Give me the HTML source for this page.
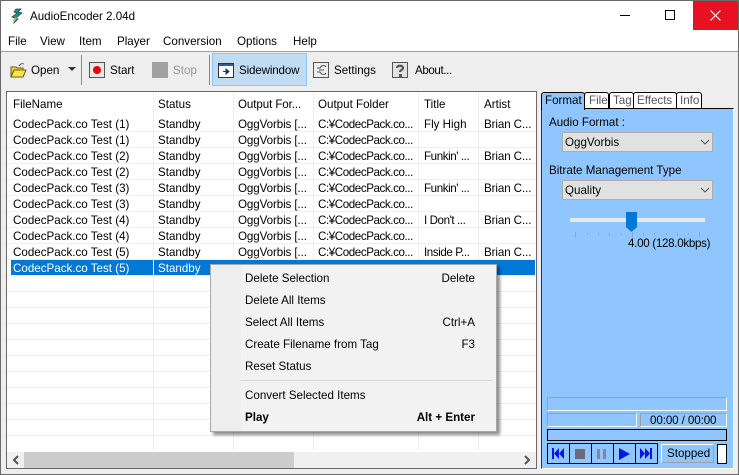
<!DOCTYPE html>
<html><head><meta charset="utf-8">
<style>
html,body{margin:0;padding:0;background:#fff}
body{width:739px;height:475px;position:relative;overflow:hidden;font:11.6px "Liberation Sans","Noto Sans CJK JP",sans-serif;color:#000}
.a,.t,.c{position:absolute}
.t{white-space:nowrap;line-height:14px;height:14px;margin-top:1px}
.c{white-space:nowrap;line-height:14px;height:14px;margin-top:1px}
.p{letter-spacing:-.42px}
.o{letter-spacing:-.1px}
.g{color:#999}
</style></head><body>
<!-- window -->
<div class="a" style="left:0;top:0;width:737px;height:473px;border:1px solid #6a6a6a;background:#fff"></div>
<svg class="a" style="left:10px;top:8px" width="16" height="16" viewBox="0 0 16 16"><path d="M6 1h5l-3 3 4 1-6 5 2 1-4 4 1-5-3-1 5-4-3-1z" fill="#2f8f7f" stroke="#1d4a52" stroke-width=".8"/><path d="M3 12l3-3 1 1-3 4z" fill="#e0b040"/></svg>
<div class="t" style="left:30px;top:9px">AudioEncoder 2.04d</div>
<div class="a" style="left:693px;top:1px;width:45px;height:29px;background:#e81123"></div>
<svg class="a" style="left:620px;top:9px" width="110" height="14"><path d="M0 6.500h10" stroke="#000"/><rect x="45.500" y="1.500" width="9" height="9" fill="none" stroke="#000"/><path d="M90.500 1.500l10 10M100.500 1.500l-10 10" stroke="#fff" stroke-width="1.1"/></svg>
<div class="t" style="left:8px;top:34px">File</div>
<div class="t" style="left:40px;top:34px">View</div>
<div class="t" style="left:79px;top:34px">Item</div>
<div class="t" style="left:117px;top:34px">Player</div>
<div class="t" style="left:163px;top:34px">Conversion</div>
<div class="t" style="left:237px;top:34px">Options</div>
<div class="t" style="left:293px;top:34px">Help</div>
<!-- toolbar -->
<div class="a" style="left:1px;top:51px;width:737px;height:1px;background:#a0a0a0"></div>
<div class="a" style="left:1px;top:52px;width:737px;height:422px;background:#eeeeee"></div>
<svg class="a" style="left:10px;top:62px" width="17" height="16" viewBox="0 0 17 16"><path d="M1 5h5l1 1h6v2H4l-3 7z" fill="#f2d43c" stroke="#6b5a10"/><path d="M1 15l3-7h12l-3 7z" fill="#fbe64a" stroke="#6b5a10"/><path d="M9 4c1-2 3-3 5-2" fill="none" stroke="#666"/></svg>
<div class="t" style="left:31px;top:63px">Open</div>
<svg class="a" style="left:68px;top:67px" width="9" height="5"><path d="M0 0h8L4 4z" fill="#333"/></svg>
<div class="a" style="left:81px;top:55px;width:1px;height:30px;background:#8a8a8a"></div>
<div class="a" style="left:89px;top:62px;width:14px;height:14px;border:1px solid #555;background:#e8e8e8"></div>
<div class="a" style="left:93px;top:66px;width:8px;height:8px;border-radius:50%;background:#ee0000"></div>
<div class="t" style="left:110px;top:63px">Start</div>
<div class="a" style="left:152px;top:62px;width:16px;height:16px;background:#a0a0a0"></div>
<div class="t g" style="left:173px;top:63px">Stop</div>
<div class="a" style="left:209px;top:55px;width:1px;height:30px;background:#8a8a8a"></div>
<div class="a" style="left:212px;top:53px;width:93px;height:31px;background:#bfdcf2;border:1px solid #92c4ec"></div>
<svg class="a" style="left:218px;top:63px" width="16" height="15"><rect x=".5" y=".5" width="15" height="14" fill="#fff" stroke="#333"/><rect x="1" y="1" width="14" height="2" fill="#3a5a9a"/><path d="M5 8.500h5M8 6l3 2.500L8 11z" stroke="#123a6a" fill="#123a6a"/></svg>
<div class="t" style="left:239px;top:63px;letter-spacing:-.15px">Sidewindow</div>
<svg class="a" style="left:313px;top:62px" width="16" height="16"><rect x=".5" y=".5" width="15" height="15" fill="#eee" stroke="#555"/><path d="M4 6h3c1-3 5-3 6-1M4 10h3c1 3 5 3 6 1M6 8h5" fill="none" stroke="#555"/></svg>
<div class="t" style="left:334px;top:63px">Settings</div>
<svg class="a" style="left:392px;top:62px" width="16" height="16"><rect x=".5" y=".5" width="15" height="15" fill="#e2e2e2" stroke="#555"/><path d="M5 6c0-3 6-3 6 0 0 2-3 2-3 4" fill="none" stroke="#555" stroke-width="2.2"/><rect x="7" y="12" width="3" height="3" fill="#555"/></svg>
<div class="t" style="left:415px;top:63px;letter-spacing:-.4px">About...</div>
<!-- list -->
<div class="a" style="left:6px;top:91px;width:529px;height:376px;border:1px solid #6a6a6a;background:#fff;overflow:hidden"></div>
<svg class="a" style="left:7px;top:92px" width="529" height="360">
<g stroke="#efefef" fill="none">
<path d="M0 39.500H529M0 55.500H529M0 71.500H529M0 87.500H529M0 103.500H529M0 119.500H529M0 135.500H529M0 151.500H529M0 167.500H529M0 183.500H529M0 199.500H529M0 215.500H529M0 231.500H529M0 247.500H529M0 263.500H529M0 279.500H529M0 295.500H529M0 311.500H529M0 327.500H529M0 343.500H529"/>
<path d="M146.500 0V358M226.500 0V358M306.500 0V358M411.500 0V358M471.500 0V358"/>
</g></svg>
<div class="c" style="left:13px;top:97px">FileName</div><div class="c" style="left:158px;top:97px">Status</div><div class="c o" style="left:238px;top:97px">Output For...</div><div class="c" style="left:318px;top:97px">Output Folder</div><div class="c" style="left:424px;top:97px">Title</div><div class="c" style="left:484px;top:97px">Artist</div>

<div class="c" style="left:13px;top:117px">CodecPack.co Test (1)</div><div class="c" style="left:158px;top:117px">Standby</div><div class="c o" style="left:238px;top:117px">OggVorbis [...</div><div class="c p" style="left:318px;top:117px">C:¥CodecPack.co...</div><div class="c" style="left:424px;top:117px">Fly High</div><div class="c o" style="left:484px;top:117px">Brian C...</div>
<div class="c" style="left:13px;top:133px">CodecPack.co Test (1)</div><div class="c" style="left:158px;top:133px">Standby</div><div class="c o" style="left:238px;top:133px">OggVorbis [...</div><div class="c p" style="left:318px;top:133px">C:¥CodecPack.co...</div>
<div class="c" style="left:13px;top:149px">CodecPack.co Test (2)</div><div class="c" style="left:158px;top:149px">Standby</div><div class="c o" style="left:238px;top:149px">OggVorbis [...</div><div class="c p" style="left:318px;top:149px">C:¥CodecPack.co...</div><div class="c p" style="left:424px;top:149px">Funkin' ...</div><div class="c o" style="left:484px;top:149px">Brian C...</div>
<div class="c" style="left:13px;top:165px">CodecPack.co Test (2)</div><div class="c" style="left:158px;top:165px">Standby</div><div class="c o" style="left:238px;top:165px">OggVorbis [...</div><div class="c p" style="left:318px;top:165px">C:¥CodecPack.co...</div>
<div class="c" style="left:13px;top:181px">CodecPack.co Test (3)</div><div class="c" style="left:158px;top:181px">Standby</div><div class="c o" style="left:238px;top:181px">OggVorbis [...</div><div class="c p" style="left:318px;top:181px">C:¥CodecPack.co...</div><div class="c p" style="left:424px;top:181px">Funkin' ...</div><div class="c o" style="left:484px;top:181px">Brian C...</div>
<div class="c" style="left:13px;top:197px">CodecPack.co Test (3)</div><div class="c" style="left:158px;top:197px">Standby</div><div class="c o" style="left:238px;top:197px">OggVorbis [...</div><div class="c p" style="left:318px;top:197px">C:¥CodecPack.co...</div>
<div class="c" style="left:13px;top:213px">CodecPack.co Test (4)</div><div class="c" style="left:158px;top:213px">Standby</div><div class="c o" style="left:238px;top:213px">OggVorbis [...</div><div class="c p" style="left:318px;top:213px">C:¥CodecPack.co...</div><div class="c p" style="left:424px;top:213px">I Don't ...</div><div class="c o" style="left:484px;top:213px">Brian C...</div>
<div class="c" style="left:13px;top:229px">CodecPack.co Test (4)</div><div class="c" style="left:158px;top:229px">Standby</div><div class="c o" style="left:238px;top:229px">OggVorbis [...</div><div class="c p" style="left:318px;top:229px">C:¥CodecPack.co...</div>
<div class="c" style="left:13px;top:245px">CodecPack.co Test (5)</div><div class="c" style="left:158px;top:245px">Standby</div><div class="c o" style="left:238px;top:245px">OggVorbis [...</div><div class="c p" style="left:318px;top:245px">C:¥CodecPack.co...</div><div class="c p" style="left:424px;top:245px">Inside P...</div><div class="c o" style="left:484px;top:245px">Brian C...</div>
<!-- selected -->
<div class="a" style="left:11px;top:260px;width:142px;height:15px;background:#0078d7"></div>
<div class="a" style="left:154px;top:260px;width:381px;height:15px;background:#0078d7"></div>
<div class="c" style="left:13px;top:261px;color:#fff">CodecPack.co Test (5)</div><div class="c" style="left:158px;top:261px;color:#fff">Standby</div>
<!-- scrollbar -->
<div class="a" style="left:7px;top:452px;width:529px;height:16px;background:#f0f0f0"></div>
<div class="a" style="left:24px;top:452px;width:270px;height:16px;background:#cdcdcd"></div>
<svg class="a" style="left:12px;top:455px" width="8" height="10"><path d="M6 1L2 5l4 4" fill="none" stroke="#555" stroke-width="2"/></svg>
<svg class="a" style="left:523px;top:455px" width="8" height="10"><path d="M2 1l4 4-4 4" fill="none" stroke="#555" stroke-width="2"/></svg>
<!-- context menu -->
<div class="a" style="left:210px;top:264px;width:285px;height:166px;background:#f2f2f2;border:1px solid #a8a8a8;box-shadow:3px 3px 3px rgba(0,0,0,.45)"></div>
<div class="a" style="left:211px;top:265px;width:30px;height:166px;background:#eeeeee"></div>
<div class="a" style="left:241px;top:380px;width:252px;height:1px;background:#d4d4d4"></div>
<div class="t" style="left:245px;top:271px">Delete Selection</div><div class="t" style="right:264px;top:271px">Delete</div>
<div class="t" style="left:245px;top:293px">Delete All Items</div>
<div class="t" style="left:245px;top:315px">Select All Items</div><div class="t" style="right:264px;top:315px">Ctrl+A</div>
<div class="t" style="left:245px;top:337px">Create Filename from Tag</div><div class="t" style="right:264px;top:337px">F3</div>
<div class="t" style="left:245px;top:359px">Reset Status</div>
<div class="t" style="left:245px;top:388px">Convert Selected Items</div>
<div class="t" style="left:245px;top:410px;font-weight:bold">Play</div><div class="t" style="right:264px;top:410px;font-weight:bold">Alt + Enter</div>
<!-- side panel -->
<div class="a" style="left:541px;top:108px;width:191px;height:359px;background:#90c6ff;border:1px solid #000;border-right-color:#fff;border-bottom-color:#fff;border-left-color:#333"></div>
<div class="a" style="left:541px;top:92px;width:42px;height:17px;background:#90c6ff;border:1px solid #000;border-bottom:0;border-radius:3px 3px 0 0"></div>
<div class="a" style="left:584px;top:92px;width:23px;height:15px;background:#fff;border:1px solid #000;border-radius:3px 3px 0 0"></div>
<div class="a" style="left:609px;top:92px;width:23px;height:15px;background:#fff;border:1px solid #000;border-radius:3px 3px 0 0"></div>
<div class="a" style="left:633px;top:92px;width:42px;height:15px;background:#fff;border:1px solid #000;border-radius:3px 3px 0 0"></div>
<div class="a" style="left:676px;top:92px;width:24px;height:15px;background:#fff;border:1px solid #000;border-radius:3px 3px 0 0"></div>
<div class="t" style="left:545px;top:93px">Format</div>
<div class="t" style="left:589px;top:93px;color:#555">File</div>
<div class="t" style="left:613px;top:93px;color:#555">Tag</div>
<div class="t" style="left:637px;top:93px;color:#555">Effects</div>
<div class="t" style="left:680px;top:93px;color:#555">Info</div>
<div class="t" style="left:549px;top:115px">Audio Format :</div>
<div class="a" style="left:562px;top:132px;width:149px;height:18px;background:#e1e1e1;border:1px solid #adadad"></div>
<div class="t" style="left:565px;top:135px">OggVorbis</div>
<svg class="a" style="left:700px;top:139px" width="10" height="6"><path d="M1 1l4 4 4-4" fill="none" stroke="#555"/></svg>
<div class="t" style="left:549px;top:163px">Bitrate Management Type</div>
<div class="a" style="left:562px;top:180px;width:149px;height:18px;background:#e1e1e1;border:1px solid #adadad"></div>
<div class="t" style="left:565px;top:183px">Quality</div>
<svg class="a" style="left:700px;top:187px" width="10" height="6"><path d="M1 1l4 4 4-4" fill="none" stroke="#555"/></svg>
<div class="a" style="left:570px;top:218px;width:135px;height:4px;background:#e7eaea"></div>
<svg class="a" style="left:570px;top:212px" width="135" height="26"><path d="M56 0h11v15l-5.500 5-5.500-5z" fill="#0078d7"/><path d="M5.500 20v5M39.500 21v3M73.500 21v3M107.500 21v3M129.500 20v5M17.500 21v2M28.500 21v2M51.500 21v2M62.500 20v5M84.500 21v2M96.500 21v2M118.500 21v2" stroke="#8aa6c4"/></svg>
<div class="t" style="left:628px;top:236px;letter-spacing:-.3px">4.00 (128.0kbps)</div>
<!-- status -->
<div class="a" style="left:547px;top:397px;width:178px;height:12px;border:1px solid;border-color:#a0a0a0 #fff #fff #a0a0a0"></div>
<div class="a" style="left:547px;top:413px;width:88px;height:12px;border:1px solid;border-color:#a0a0a0 #fff #fff #a0a0a0"></div>
<div class="a" style="left:640px;top:413px;width:85px;height:12px;border:1px solid;border-color:#a0a0a0 #fff #fff #a0a0a0"></div>
<div class="t" style="left:650px;top:413px;letter-spacing:-.1px">00:00 / 00:00</div>
<div class="a" style="left:547px;top:429px;width:178px;height:10px;border:1px solid #000"></div>
<svg class="a" style="left:547px;top:443px" width="111" height="21"><g fill="none" stroke="#000"><rect x=".5" y=".5" width="110" height="20"/><path d="M22.500 0v21M44.500 0v21M66.500 0v21M88.500 0v21"/></g>
<path d="M5 5h2v11H5zM7 10.500L12 5v11zM12 10.500L17 5v11z" fill="#0018e0"/>
<rect x="28" y="6" width="10" height="10" fill="#6a6a78"/>
<path d="M50 6h3v10h-3zM56 6h3v10h-3z" fill="#7a8aa8"/>
<path d="M72 5l11 6-11 6z" fill="#0018e0"/>
<path d="M93 5l5 5.500-5 5.500zM98 5l5 5.500-5 5.500zM103 5h2v11h-2z" fill="#0018e0"/></svg>
<div class="a" style="left:661px;top:444px;width:51px;height:17px;border:1px solid;border-color:#fff #a0a0a0 #a0a0a0 #fff"></div>
<div class="t" style="left:667px;top:446px">Stopped</div>
<div class="a" style="left:717px;top:444px;width:8px;height:18px;background:#fff;border:1px solid #000"></div>
</body></html>
